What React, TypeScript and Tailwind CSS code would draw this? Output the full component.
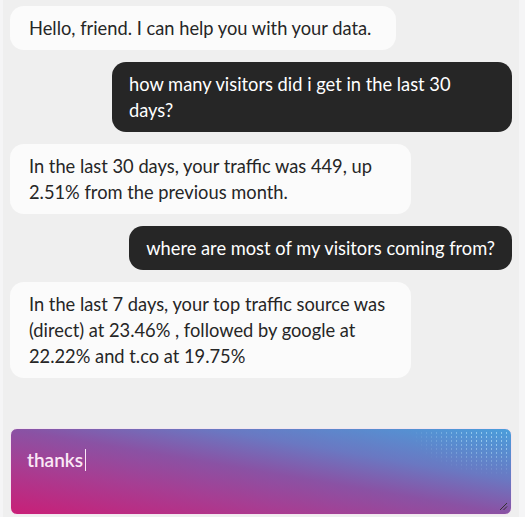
import React from 'react';

type Msg = { from: 'bot' | 'me'; text: string };

const messages: Msg[] = [
  { from: 'bot', text: 'Hello, friend. I can help you with your data.' },
  { from: 'me', text: 'how many visitors did i get in the last 30 days?' },
  { from: 'bot', text: 'In the last 30 days, your traffic was 449, up 2.51% from the previous month.' },
  { from: 'me', text: 'where are most of my visitors coming from?' },
  {
    from: 'bot',
    text: 'In the last 7 days, your top traffic source was (direct) at 23.46% , followed by google at 22.22% and t.co at 19.75%',
  },
];

function Bubble({ msg }: { msg: Msg }) {
  const mine = msg.from === 'me';
  return (
    <div className={mine ? 'flex justify-end' : 'flex justify-start'}>
      <div
        className={
          mine
            ? 'max-w-[400px] rounded-[14px] bg-[#262626] px-[17px] py-[9px] text-[18.3px] leading-[26px] text-white'
            : 'max-w-[401px] rounded-[14px] bg-[#fbfbfb] pl-[19px] pr-[25px] py-[9px] text-[18.3px] leading-[26px] text-[#262626]'
        }
      >
        {msg.text}
      </div>
    </div>
  );
}

export default function App() {
  return (
    <div
      className="flex h-[517px] w-[525px] flex-col overflow-hidden border-l-[3px] border-r-[6px] border-[#f5f5f6] bg-[#efefef] px-[7px] pt-[6px] pb-[2px]"
      style={{ fontFamily: 'Lato, "Open Sans", sans-serif' }}
    >
      <div className="flex flex-1 flex-col gap-[12px]">
        {messages.map((m, i) => (
          <Bubble key={i} msg={m} />
        ))}
      </div>

      {/* message box */}
      <div className="relative h-[87px] w-full overflow-hidden rounded-[7px] border border-[#f3e6f0] bg-[linear-gradient(to_top_right,#c91f77_0%,#a63e93_30%,#8a52a4_50%,#6a78c2_70%,#4a9edb_100%)] px-[16px] pt-[17px]">
        <div className="pointer-events-none absolute right-[2px] top-[2px] h-[46px] w-[100px] bg-[radial-gradient(circle,rgba(200,240,255,0.55)_0.5px,transparent_1px)] bg-[length:5px_4px] [mask-image:radial-gradient(ellipse_at_top_right,black_25%,transparent_70%)]" />
        <div className="relative flex items-center text-[19px] font-semibold leading-[28px] text-[#fbe8f6]">
          thanks
          <span className="ml-[2px] inline-block h-[22px] w-px bg-[#fbe8f6]" />
        </div>
        <svg className="absolute bottom-[3px] right-[3px]" width="9" height="9" viewBox="0 0 9 9">
          <path d="M1 8 L8 1 M4.5 8 L8 4.5" stroke="#333" strokeWidth="1" />
        </svg>
      </div>
    </div>
  );
}
